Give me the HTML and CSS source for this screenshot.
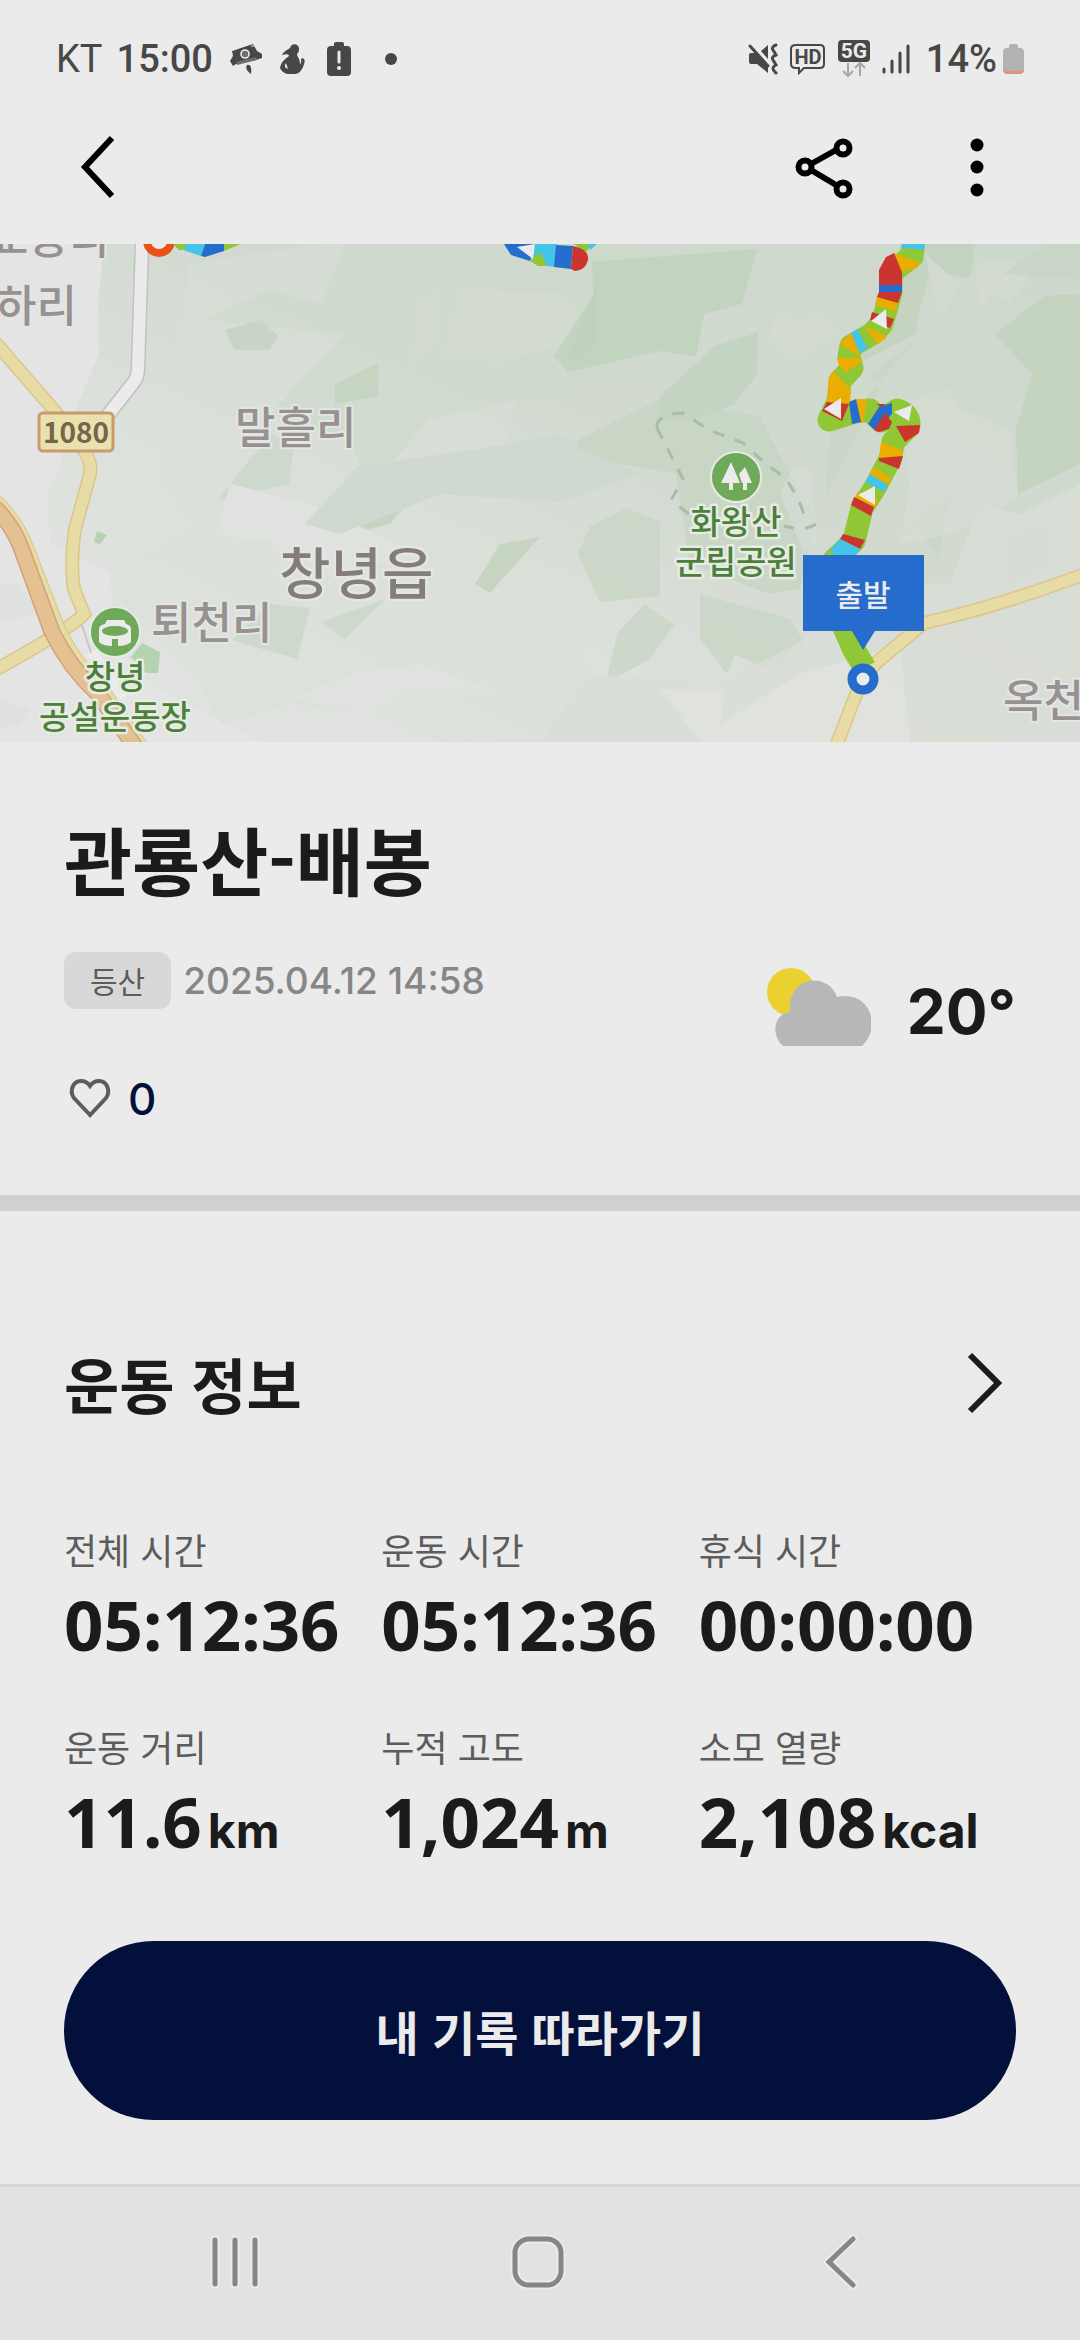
FILE: index.html
```html
<!DOCTYPE html>
<html lang="ko">
<head>
  <meta charset="UTF-8">
  <meta name="viewport" content="width=device-width, initial-scale=1.0">
  <title>관룡산-배봉</title>
  <link rel="stylesheet" href="styles.css">
</head>
<body>
  <div class="screen">
    <div class="status-bar">
      <div class="status-left">
        <span class="carrier">KT</span>
        <span class="clock">15:00</span>
        <svg class="icon-camera" width="34" height="32" viewBox="0 0 34 32" aria-hidden="true">
          <path d="M3 8 24 1 28 8 33 11 33 15 27 17 7 21 4 23 1 18 4 13Z" fill="#474747"/>
          <path d="M7 19 27 14 28 17 8 22Z" fill="#6e6e6e"/>
          <path d="M4 7 9 5M22 3 25 3" stroke="#ebebeb" stroke-width="1"/>
          <circle cx="16" cy="11" r="4" fill="#6e6e6e" stroke="#ebebeb" stroke-width="1.6"/>
          <path d="M18 22C21 21 23 24 22 31 18 28 16 25 18 22Z" fill="#474747"/>
        </svg>
        <svg class="icon-person" width="28" height="32" viewBox="0 0 28 32" aria-hidden="true">
          <path d="M11 5C12 0 20 0 20 6 20 9 19 10 18 11 18 14 21 15 21 21 23 20 22 18 22 16 24 14 27 17 25 21 24 26 20 31 16 31H8C5 30 2 28 1 25 2 19 6 16 10 13 10 11 7 11 3 12 4 9 8 7 11 5Z" fill="#474747"/>
          <path d="M7 20C5 23 6 25 9 26Z" fill="#ebebeb"/>
        </svg>
        <svg class="icon-alert" width="24" height="34" viewBox="0 0 24 34" aria-hidden="true">
          <path d="M7 4V2Q7 0 9 0H15Q17 0 17 2V4H20Q24 4 24 8V30Q24 34 20 34H4Q0 34 0 30V8Q0 4 4 4Z" fill="#474747"/>
          <path d="M12 10V20" stroke="#ebebeb" stroke-width="3" stroke-linecap="round"/>
          <circle cx="12" cy="26" r="2" fill="#ebebeb"/>
        </svg>
        <span class="dot"></span>
      </div>
      <div class="status-right">
        <svg width="30" height="32" viewBox="0 0 30 32" aria-hidden="true">
          <path d="M1 12Q1 10 3 10H8L20 23V30L9 21H3Q1 21 1 19ZM20 2V16L13 8Z" fill="#474747"/>
          <path d="M2 3 20 23" stroke="#474747" stroke-width="3" stroke-linecap="round"/>
          <path d="M28 2Q23 4 25 7T28 12Q23 14 25 17T28 22Q22 25 28 30" fill="none" stroke="#474747" stroke-width="3" stroke-linecap="round"/>
        </svg>
        <svg width="36" height="32" viewBox="0 0 36 32" aria-hidden="true">
          <path d="M6 2H30Q34 2 34 6V21Q34 25 30 25H14L9 30V25H6Q1 25 1 21V6Q1 2 6 2Z" fill="none" stroke="#474747" stroke-width="2"/>
          <text class="tag hd" x="18" y="21" text-anchor="middle">HD</text>
        </svg>
        <svg width="32" height="38" viewBox="0 0 32 38" aria-hidden="true">
          <rect width="32" height="22" rx="4" fill="#474747"/>
          <text class="tag five-g" x="16" y="18" text-anchor="middle">5G</text>
          <path d="M10 23V36M5 31 10 36 15 31M22 36V23M17 28 22 23 27 28" fill="none" stroke="#a6a6a6" stroke-width="2"/>
        </svg>
        <svg width="28" height="30" viewBox="0 0 28 30" aria-hidden="true">
          <path d="M2 25V28M10 17V28M18 9V28M26 2V28" stroke="#474747" stroke-width="3" stroke-linecap="round"/>
        </svg>
        <span class="percent">14%</span>
        <svg class="icon-battery" width="21" height="30" viewBox="0 0 21 30" aria-hidden="true">
          <path d="M6 4V2Q6 0 8 0H13Q15 0 15 2V4H17Q21 4 21 8V27H0V8Q0 4 4 4Z" fill="#b2b2b2"/>
          <path d="M0 27H21Q20 30 17 30H4Q1 30 0 27Z" fill="#e59173"/>
        </svg>
      </div>
    </div>

    <header class="app-bar">
      <button class="icon-button" aria-label="뒤로">
        <svg width="36" height="64" viewBox="0 0 36 64"><path d="M32 3 5 32 32 61" fill="none" stroke="#000" stroke-width="6"/></svg>
      </button>
      <div class="app-actions">
        <button class="icon-button" aria-label="공유">
          <svg width="60" height="64" viewBox="0 0 60 64">
            <g fill="none" stroke="#000" stroke-width="6">
              <path d="M17 29 42 15M17 35 42 50"/>
              <circle cx="11" cy="32" r="6.5"/>
              <circle cx="49" cy="13" r="6.5"/>
              <circle cx="49" cy="54" r="6.5"/>
            </g>
          </svg>
        </button>
        <button class="icon-button" aria-label="더보기">
          <svg width="14" height="64" viewBox="0 0 14 64"><circle cx="7" cy="10" r="6.5"/><circle cx="7" cy="32" r="6.5"/><circle cx="7" cy="55" r="6.5"/></svg>
        </button>
      </div>
    </header>

    <main>
      <svg class="map" viewBox="0 0 1080 498" role="img" aria-label="코스 지도">
        <defs>
          <linearGradient id="land" x1="0" y1="1" x2="1" y2="0">
            <stop offset="0" stop-color="#e1e3e0"/>
            <stop offset="0.35" stop-color="#dde1dc"/>
            <stop offset="0.6" stop-color="#d2dad0"/>
            <stop offset="1" stop-color="#cdd8cc"/>
          </linearGradient>
        </defs>
        <rect width="1080" height="498" fill="url(#land)"/>

        <!-- relief -->
        <path d="M0 0H104L98 60 99 110 81 152 64 190 60 225 47 250 50 300 110 330 112 395 150 440 260 498H0Z" fill="#e4e4e4"/>
        <path d="M190 20 320 0H480L520 120 500 260 560 380 640 498H440L380 470 290 460 220 480 200 440 130 370 110 330 190 280 160 240 165 180 230 150 175 100Z" fill="#d9dfd8" opacity=".5"/>
        <path d="M205 75 270 45 320 60 345 0H640L700 90 600 140 500 160 430 175 390 220 360 222 350 195 270 170 345 90 250 80Z" fill="#cdd8cc" opacity=".6"/>
        <path d="M225 86 260 76 278 92 270 106 234 106Z" fill="#c7d4c6"/>
        <path d="M335 140 378 119V152L335 160ZM372 237 413 253 390 280 348 290ZM500 300 540 293 490 349 475 340Z" fill="#c5d5c1"/>
        <path d="M273 190 293 205 289 240 218 256 250 215ZM322 378 385 355 345 395ZM270 360 310 364 297 415 232 396Z" fill="#cbd7ca" opacity=".8"/>
        <path d="M230 240 310 260 420 310 330 330 270 298 215 290ZM350 430 420 420 500 450 400 450 375 470 290 455Z" fill="#e0e2df"/>
        <path d="M358 222 480 205 560 190 640 230 560 258 440 250 340 290 305 280Z" fill="#d0d9cf"/>
        <path d="M420 60 435 50 440 90 413 122ZM445 110 460 45 560 50 600 90 500 118Z" fill="#d3dbd1"/>
        <path d="M592 18 757 5 742 60 704 70 696 113 660 107 568 128 554 112 594 50Z" fill="#c2d4bf"/>
        <path d="M594 50 597 42 594 105 577 118 568 112ZM660 152 715 102 758 88 757 130 735 160 688 178 660 175Z" fill="#bfd1bc" opacity=".7"/>
        <path d="M578 196 660 155 760 172 795 240 815 275 800 345 770 350 690 320 676 230 620 220 578 205Z" fill="#c4d4c0" opacity=".7"/>
        <path d="M578 310 590 282 627 264 660 278 660 352 600 358ZM618 388 645 360 674 381 650 415 605 440ZM700 350 790 375 805 400 770 427 735 410 727 430 700 395Z" fill="#c6d4c2" opacity=".7"/>
        <path d="M900 0H975L970 34 930 28 920 65 915 90 858 120 890 45ZM995 90 1045 52 1080 50V220L1018 250 1016 185 1032 130Z" fill="#c0d2bd" opacity=".8"/>
        <path d="M775 60 800 80 820 65 840 90 795 120 770 95ZM925 10 960 40 940 75ZM975 20 1010 15 1030 30 1010 60 990 50 980 70Z" fill="#d3dbd1"/>
        <path d="M912 100 870 130 880 145 825 255 830 190 860 160ZM900 290 950 250 938 315 920 285ZM1010 290 1053 276 1050 320 1005 345ZM1003 30 1045 0H1080V35Z" fill="#c8d5c4" opacity=".8"/>
        <path d="M795 220 810 230 818 300 804 310 780 250ZM900 160 930 150 950 145 960 165 1010 185 1018 255 950 290 900 300 910 240Z" fill="#d5dcd3" opacity=".8"/>
        <path d="M540 498 590 430 720 440 805 395 820 340 950 340 980 260 1020 270 1080 240V498Z" fill="#d9ddd7" opacity=".8"/>
        <path d="M660 445 725 445 720 480 800 430 900 400 910 498H700Z" fill="#e0e2df" opacity=".8"/>
        <path d="M0 340H20L40 370 10 375H0ZM0 455 30 465 20 480 0 485Z" fill="#dfe1de"/>
        <path d="M97 287 107 291 100 300 94 298ZM142 399 160 408 158 429H146L131 413Z" fill="#b4d3b0"/>

        <!-- roads -->
        <g fill="none">
          <path d="M142 0 138 125Q138 132 134 138L104 176" stroke="#c1c1c1" stroke-width="15"/>
          <path d="M142 0 138 125Q138 132 134 138L104 176" stroke="#ebebeb" stroke-width="12"/>
          <path d="M80 375 98 430 122 455" stroke="#c7c7c7" stroke-width="2"/>
          <path d="M92 408 122 455" stroke="#ebebeb" stroke-width="12"/>
          <g stroke="#dcc589" stroke-width="14">
            <path d="M-5 98 66 180M80 200Q93 218 90 230L75 285Q70 320 74 345L84 370Q70 385-5 426"/>
            <path d="M1085 330Q1000 362 924 379L877 418 862 435 835 505"/>
          </g>
          <g stroke="#e7dca6" stroke-width="11">
            <path d="M-5 98 66 180M80 200Q93 218 90 230L75 285Q70 320 74 345L84 370Q70 385-5 426"/>
            <path d="M1085 330Q1000 362 924 379L877 418 862 435 835 505"/>
          </g>
          <path d="M-5 252Q20 275 30 303L62 385Q76 415 108 448L146 504" stroke="#dcc589" stroke-width="8"/>
          <path d="M-5 252Q20 275 30 303L62 385Q76 415 108 448L146 504" stroke="#e7dca6" stroke-width="6"/>
          <path d="M-5 264Q14 282 23 309L52 388Q70 424 98 450L136 504" stroke="#d0a27a" stroke-width="17"/>
          <path d="M-5 264Q14 282 23 309L52 388Q70 424 98 450L136 504" stroke="#e5c192" stroke-width="14"/>
        </g>
        <rect x="39" y="169" width="74" height="38" rx="4" fill="#e9e1ae" stroke="#c99a6c" stroke-width="3"/>
        <text class="road-number" x="76" y="199" text-anchor="middle">1080</text>

        <!-- park boundary -->
        <path d="M657 184Q656 170 683 169L709 186 743 199 767 221 784 233Q798 250 807 279M816 280Q805 288 784 282M657 184 683 235 671 256 690 271" fill="none" stroke="#a9bba9" stroke-width="3" stroke-dasharray="12 11"/>

        <g class="village">
          <text x="-12" y="10">교동리</text>
          <text x="-4" y="78">하리</text>
          <text x="235" y="200">말흘리</text>
          <text x="151" y="395">퇴천리</text>
          <text x="1003" y="473">옥천리</text>
        </g>
        <text class="town" x="279" y="350">창녕읍</text>

        <g class="place" text-anchor="middle">
          <text x="115" y="445">창녕</text>
          <text x="115" y="485">공설운동장</text>
          <text x="736" y="290">화왕산</text>
          <text x="736" y="330">군립공원</text>
        </g>
        <circle cx="115" cy="388" r="25" fill="#6fa95a" stroke="#e6ebe4" stroke-width="2"/>
        <path d="M107 376H124L126 380Q131 381 131 385V398Q127 402 118 402V395H112V402Q103 402 99 398V385Q99 381 105 380Z" fill="#ebebeb"/>
        <ellipse cx="115" cy="387" rx="13" ry="5" fill="#6fa95a"/>
        <circle cx="736" cy="233" r="25" fill="#6fa95a" stroke="#e6ebe4" stroke-width="2"/>
        <path d="M731 218 740 239H733V246H729V239H721ZM745 223 752 239H747V246H743V239H742L739 230Z" fill="#ebebeb"/>

        <!-- track, coloured by speed -->
        <circle cx="159" cy="-3" r="12" fill="#ebebeb" stroke="#ea5217" stroke-width="8"/>
        <path d="M173 0 179 6 183 6 188 0ZM224 0H241L224 7Z" fill="#90c735"/>
        <path d="M187 0H205L201 12 183 6Z" fill="#45c4e9"/>
        <path d="M205 0H224V7L205 13 201 12Z" fill="#266ccd"/>
        <path d="M504 0H537L530 17 511 11Z" fill="#266ccd"/>
        <path d="M535 0H557L556 23 547 22 532 15Z" fill="#45c4e9"/>
        <path d="M530 17 540 8 547 22H538ZM574 0H592L586 8 580 5Z" fill="#90c735"/>
        <path d="M588 0H597L590 6Z" fill="#45c4e9"/>
        <path d="M556 1 573 2 571 25 554 23Z" fill="#266ccd"/>
        <path d="M573 2 580 4Q589 8 588 16 585 27 575 27L571 25Z" fill="#ca362d"/>
        <path d="M517 3 535 0 533 15Z" fill="#ebebeb"/>

        <path d="M914 -4 912 12 891 29V48L882 80 872 90 851 102 849 113 852 124 840 137 838 158 829 176 855 168 870 166 881 177 897 166Q910 170 909 182L893 198 891 213 876 242 862 264 854 297 834 316 838 370 854 406 865 424" fill="none" stroke="#90c735" stroke-width="23" stroke-linejoin="round"/>
        <g fill="#ebad00">
          <path d="M894 9 920 19 917 24 902 28ZM877 52 898 58 896 67 875 61ZM864 82 887 92 885 95 877 100ZM851 89 860 113 840 100 843 96Z"/>
          <path d="M837 114H861L862 118 845 128 839 121ZM833 127 848 143H851L850 160 827 158 829 133ZM856 155 867 155 863 179H861Z"/>
          <path d="M881 198 902 206 903 212 879 214ZM874 223 891 234 888 241 870 230ZM858 248 879 256 874 264 855 253Z"/>
        </g>
        <g fill="#ca362d">
          <path d="M894 9 902 28V41H879V26L886 13ZM879 48H902L898 59 877 53ZM872 68 894 75 890 84 870 76ZM827 158 849 160 842 177 822 167Z"/>
          <path d="M877 160H886L881 164ZM896 182 920 181 919 189 905 198ZM879 214 903 212 899 225 879 217ZM854 253 874 263 871 272 851 261ZM843 290 865 296 860 305 840 295Z"/>
        </g>
        <path d="M879 41H902V48H879ZM849 158 856 155 861 178 852 180ZM879 163 892 159V170L876 187 868 180Z" fill="#266ccd"/>
        <path d="M885 169 892 178 889 185 879 188 874 186Z" fill="#ca362d"/>
        <path d="M903 -4H926L924 6 901 4ZM851 89 857 85 868 104 860 109ZM870 230 888 241 884 248 865 238ZM840 295 860 305 855 312H836L830 306Z" fill="#45c4e9"/>
        <path d="M871 77 886 65 887 85ZM824 165 841 154V175ZM894 168 912 161 909 177ZM858 251 875 242V261Z" fill="#ebebeb"/>

        <circle cx="863" cy="435" r="11" fill="#ebebeb" stroke="#266ccd" stroke-width="9"/>
        <path d="M803 311H924V387H875L863 406 852 387H803Z" fill="#266ccd"/>
        <text class="start" x="863" y="362" text-anchor="middle">출발</text>
      </svg>

      <section class="summary">
        <h1>관룡산-배봉</h1>
        <div class="summary-body">
          <div class="summary-left">
            <div class="meta">
              <span class="badge">등산</span>
              <time datetime="2025-04-12T14:58">2025.04.12 14:58</time>
            </div>
            <button class="like" aria-label="좋아요 0">
              <svg width="48" height="48" viewBox="0 0 48 48"><path d="M24 40 8 23C3 16 7 6 15 6 19 6 22 8 24 11 26 8 29 6 33 6 41 6 45 16 40 23Z" fill="none" stroke="#5c5c5c" stroke-width="4"/></svg>
              <span>0</span>
            </button>
          </div>
          <div class="weather">
            <svg width="104" height="80" viewBox="0 0 104 80" aria-hidden="true">
              <circle cx="24" cy="24" r="24" fill="#ead131"/>
              <path d="M16 78C4 68 6 46 23 44 20 6 62 4 70 29 102 22 116 58 95 78Z" fill="#b7b7b7"/>
            </svg>
            <span class="temp">20°</span>
          </div>
        </div>
      </section>

      <section class="workout">
        <div class="section-head">
          <h2>운동 정보</h2>
          <button class="icon-button" aria-label="운동 정보 더보기">
            <svg width="36" height="64" viewBox="0 0 36 64"><path d="M4 4 32 32 4 60" fill="none" stroke="#1b1b1b" stroke-width="6"/></svg>
          </button>
        </div>
        <dl class="stats">
          <div class="stat"><dt>전체 시간</dt><dd>05:12:36</dd></div>
          <div class="stat"><dt>운동 시간</dt><dd>05:12:36</dd></div>
          <div class="stat"><dt>휴식 시간</dt><dd>00:00:00</dd></div>
          <div class="stat"><dt>운동 거리</dt><dd>11.6<span class="unit">km</span></dd></div>
          <div class="stat"><dt>누적 고도</dt><dd>1,024<span class="unit">m</span></dd></div>
          <div class="stat"><dt>소모 열량</dt><dd>2,108<span class="unit">kcal</span></dd></div>
        </dl>
        <button class="follow">내 기록 따라가기</button>
      </section>
    </main>

    <nav class="nav-bar">
      <button class="icon-button" aria-label="최근 앱">
        <svg width="56" height="60" viewBox="0 0 56 60" fill="none" stroke-linecap="round">
          <path d="M8 8V52M28 8V52M48 8V52" stroke="#ebebeb" stroke-width="9"/>
          <path d="M8 8V52M28 8V52M48 8V52" stroke="#868686" stroke-width="5"/>
        </svg>
      </button>
      <button class="icon-button" aria-label="홈">
        <svg width="60" height="60" viewBox="0 0 60 60" fill="none">
          <rect x="7" y="7" width="46" height="46" rx="14" stroke="#ebebeb" stroke-width="9"/>
          <rect x="7" y="7" width="46" height="46" rx="14" stroke="#868686" stroke-width="5"/>
        </svg>
      </button>
      <button class="icon-button" aria-label="이전">
        <svg width="40" height="60" viewBox="0 0 40 60" fill="none" stroke-linecap="round">
          <path d="M32 7 8 30 32 53" stroke="#ebebeb" stroke-width="9"/>
          <path d="M32 7 8 30 32 53" stroke="#868686" stroke-width="5"/>
        </svg>
      </button>
    </nav>
  </div>
</body>
</html>
```
FILE: styles.css
```css
* {
  box-sizing: border-box;
}

body {
  margin: 0;
  background-color: #ebebeb;
  color: #1b1b1b;
  font-family: "Noto Sans CJK KR", sans-serif;
}

button {
  border: 0;
  padding: 0;
  background: none;
  color: inherit;
  font-family: inherit;
}

svg {
  display: block;
}

.screen {
  min-height: 100vh;
  display: flex;
  flex-direction: column;
}

main {
  flex: 1;
}

/* Status bar */
.status-bar {
  display: flex;
  justify-content: space-between;
  height: 90px;
  padding: 28px 56px 0;
  color: #474747;
  font-family: Roboto, sans-serif;
  font-size: 38px;
  line-height: 62px;
}

.status-left,
.status-right {
  display: flex;
  align-items: center;
  height: 62px;
}

.carrier {
  margin-right: 14px;
}

.clock,
.percent {
  font-weight: 500;
}

.icon-camera,
.icon-person {
  margin-left: 16px;
}

.icon-alert {
  margin-left: 20px;
}

.dot {
  width: 12px;
  height: 12px;
  margin-left: 34px;
  border-radius: 50%;
  background-color: #474747;
}

.status-right {
  gap: 12px;
}

.percent {
  margin-left: 4px;
}

.icon-battery {
  margin-left: -6px;
}

.tag {
  font-family: Roboto, sans-serif;
  font-weight: 700;
}

.hd {
  font-size: 20px;
  fill: #474747;
}

.five-g {
  font-size: 21px;
  fill: #ebebeb;
}

/* App bar */
.app-bar {
  display: flex;
  align-items: center;
  justify-content: space-between;
  height: 154px;
  padding: 0 96px 0 80px;
}

.app-actions {
  display: flex;
  gap: 116px;
}

/* Map */
.map {
  width: 100%;
  height: auto;
}

.map text {
  paint-order: stroke;
  stroke-linejoin: round;
}

.village {
  fill: #979291;
  stroke: #e4e6e3;
  stroke-width: 4px;
  font-size: 44px;
  font-weight: 500;
}

.town {
  fill: #857d7b;
  stroke: #e4e6e3;
  stroke-width: 5px;
  font-size: 56px;
  font-weight: 500;
}

.place {
  fill: #4c7f39;
  stroke: #e6ebe4;
  stroke-width: 5px;
  font-size: 33px;
  font-weight: 500;
}

.road-number {
  fill: #75654a;
  font-size: 28px;
  font-weight: 700;
}

.start {
  fill: #ebebeb;
  font-size: 30px;
  font-weight: 500;
}

/* Summary */
.summary {
  padding: 64px 64px 72px;
  border-bottom: 16px solid #d0d0d0;
}

h1 {
  margin: 0;
  font-size: 74px;
  font-weight: 700;
  line-height: 104px;
}

.summary-body {
  display: flex;
  justify-content: space-between;
  margin-top: 42px;
}

.meta {
  display: flex;
  align-items: center;
  gap: 12px;
}

.badge {
  padding: 0 26px;
  border-radius: 12px;
  background-color: #d8d8d8;
  color: #5c5c5c;
  font-size: 30px;
  line-height: 57px;
}

time {
  color: #868686;
  font-family: Inter, sans-serif;
  font-size: 37px;
  font-weight: 500;
  line-height: 57px;
}

.like {
  display: flex;
  align-items: center;
  gap: 14px;
  margin: 66px 0 0 2px;
  color: #04103c;
  font-family: Inter, sans-serif;
  font-size: 44px;
  font-weight: 500;
  line-height: 48px;
}

.weather {
  display: flex;
  align-items: flex-start;
  gap: 36px;
  padding-top: 16px;
}

.temp {
  font-family: Inter, sans-serif;
  font-size: 62px;
  font-weight: 700;
  line-height: 88px;
}

/* Workout */
.workout {
  padding: 128px 64px 64px;
}

.section-head {
  display: flex;
  align-items: center;
  justify-content: space-between;
  padding-right: 14px;
}

h2 {
  margin: 0;
  font-size: 60px;
  font-weight: 700;
  line-height: 88px;
}

.stats {
  display: grid;
  grid-template-columns: repeat(3, 1fr);
  row-gap: 56px;
  margin: 96px 0 0;
}

dt {
  color: #5c5c5c;
  font-size: 36px;
  line-height: 53px;
}

dd {
  margin: 8px 0 0;
  font-family: "Noto Sans", sans-serif;
  font-size: 69px;
  font-weight: 700;
  line-height: 80px;
  white-space: nowrap;
}

.unit {
  margin-left: 6px;
  font-family: Inter, sans-serif;
  font-size: 48px;
  font-weight: 700;
  line-height: 48px;
}

.follow {
  width: 100%;
  height: 179px;
  margin-top: 80px;
  border-radius: 90px;
  background-color: #04103c;
  color: #ebebeb;
  font-size: 47px;
  font-weight: 700;
}

/* Navigation bar */
.nav-bar {
  display: grid;
  grid-template-columns: repeat(3, 1fr);
  align-items: center;
  justify-items: center;
  height: 156px;
  padding: 0 88px 4px 84px;
  border-top: 3px solid #d7d7d7;
  background-color: #e2e2e4;
}
```
